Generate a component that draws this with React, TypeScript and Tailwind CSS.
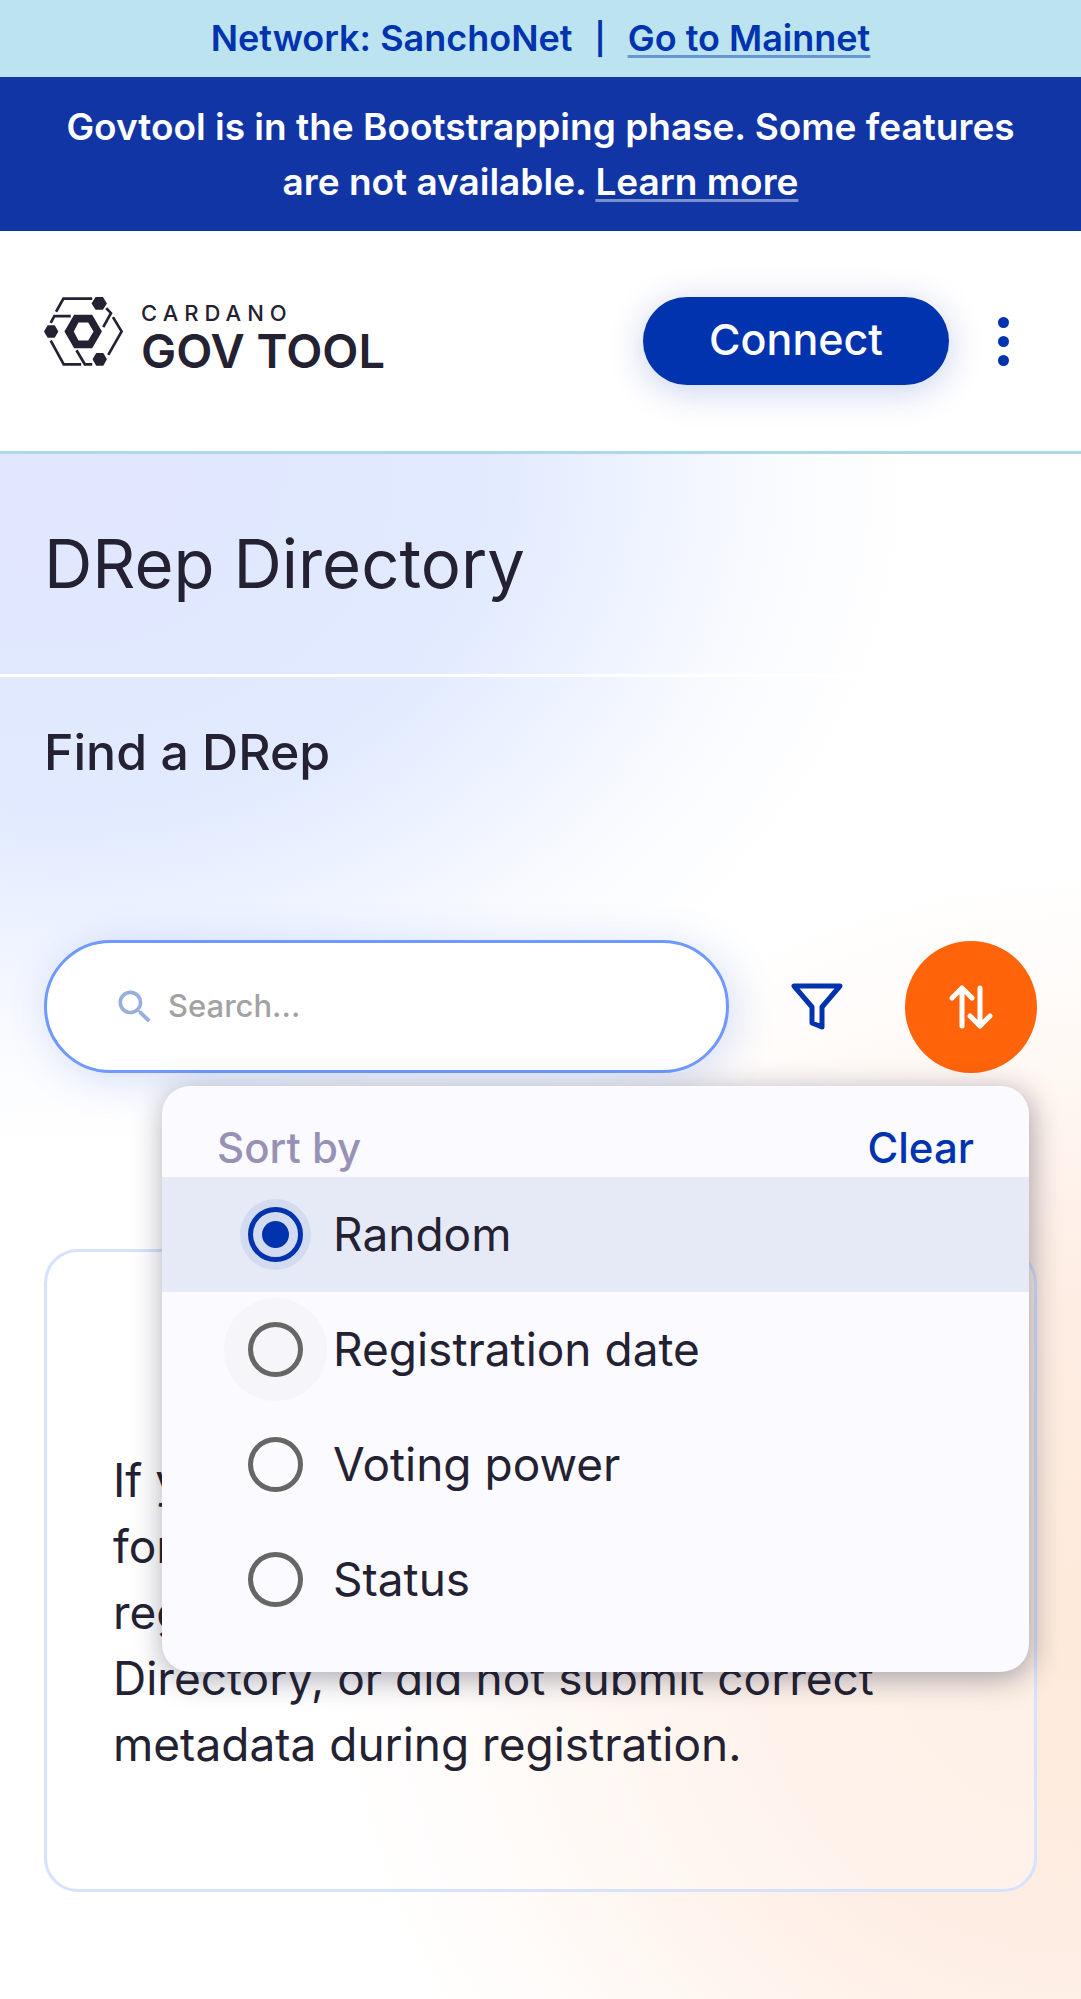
import { useState } from "react";

const SORT_OPTIONS = ["Random", "Registration date", "Voting power", "Status"];

function LogoMark() {
  return (
    <svg viewBox="0 0 236 206" className="h-[69px] w-[79px]" fill="none" stroke="#242232" strokeWidth="8" aria-hidden="true">
      <path d="M36 44 58 5H144" />
      <path d="M20 77 31 57H80" />
      <path d="M186 33 200 48 177 90" />
      <path d="M206 60 232 103 192 173" />
      <path d="M20 130 59 201H111" />
      <path d="M97 159 122 201H144" />
      <g fill="#242232" stroke="none">
        <path d="M154 0h22l12 19-12 19h-22l-12-19z" />
        <path d="M11 84h21l11 19-11 19H11L0 103z" />
        <path d="M156 167h21l11 19-11 19h-21l-11-19z" />
        <path fillRule="evenodd" d="M90 53h54l29 50-29 50H90l-29-50zM103 76l-14 27 14 27h29l16-27-16-27z" />
      </g>
    </svg>
  );
}

function Header() {
  return (
    <header className="flex items-start justify-between border-b-[3px] border-[#add8e6] bg-white py-[66px] pr-14 pl-11">
      <a href="#home" className="flex items-start gap-[18px] text-[#242232]" aria-label="Cardano Gov Tool">
        <LogoMark />
        <span className="flex flex-col">
          <span className="text-[22px] leading-8 font-medium tracking-[6px]">CARDANO</span>
          <span className="text-[47px] leading-[44px] font-semibold">GOV TOOL</span>
        </span>
      </a>
      <div className="flex items-center gap-8">
        <button
          type="button"
          className="rounded-full bg-[#0033ad] px-[66px] pt-3 pb-4 text-[43px] leading-[60px] font-medium text-white shadow-[0_6px_36px_rgba(0,51,173,0.22)]"
        >
          Connect
        </button>
        <button type="button" aria-label="Open menu" className="flex w-11 flex-col items-center gap-2">
          <span className="size-[11px] rounded-full bg-[#0033ad]" />
          <span className="size-[11px] rounded-full bg-[#0033ad]" />
          <span className="size-[11px] rounded-full bg-[#0033ad]" />
        </button>
      </div>
    </header>
  );
}

function SortPopover() {
  const [selected, setSelected] = useState("Random");
  return (
    <div className="absolute top-full right-2 left-[118px] z-10 mt-[13px] rounded-[28px] bg-[#fbfaff] pt-[33px] pb-[35px] shadow-[2px_6px_30px_rgba(20,20,50,0.38)]">
      <div className="flex items-center justify-between px-[55px] text-[42px] leading-[58px] font-medium">
        <span className="text-[#9792b5]">Sort by</span>
        <button type="button" className="text-[#0033ad]" onClick={() => setSelected("")}>
          Clear
        </button>
      </div>
      <div role="radiogroup" aria-label="Sort by">
        {SORT_OPTIONS.map((option) => (
          <label
            key={option}
            className="group flex items-center gap-[30px] py-[30px] pl-[86px] text-[46px] leading-[55px] text-[#242232] has-checked:bg-[#e6eaf6]"
          >
            <input
              type="radio"
              name="sort"
              checked={selected === option}
              onChange={() => setSelected(option)}
              className="grid size-[55px] shrink-0 appearance-none place-items-center rounded-full border-[5px] border-[#666666] before:size-[27px] before:rounded-full group-nth-2:bg-[#f6f6fa] group-nth-2:shadow-[0_0_0_24px_#f6f6fa] checked:border-[#0033ad] checked:bg-[#d2dbef] checked:shadow-[0_0_0_8px_#d2dbef] checked:before:bg-[#0033ad]"
            />
            {option}
          </label>
        ))}
      </div>
    </div>
  );
}

function SearchBar() {
  return (
    <div className="relative flex items-center">
      <label className="flex h-[133px] min-w-0 flex-1 items-center gap-[11px] rounded-full border-[3px] border-[#6f99ff] bg-white pl-[66px] shadow-[6px_6px_44px_rgba(47,98,220,0.2)]">
        <svg viewBox="0 0 24 24" className="size-11 shrink-0" fill="#99adde" aria-hidden="true">
          <path d="M15.5 14h-.79l-.28-.27C15.41 12.59 16 11.11 16 9.5 16 5.91 13.09 3 9.5 3S3 5.91 3 9.5 5.91 16 9.5 16c1.61 0 3.09-.59 4.23-1.57l.27.28v.79l5 4.99L20.49 19zm-6 0C7.01 14 5 11.99 5 9.5S7.01 5 9.5 5 14 7.01 14 9.5 11.99 14 9.5 14" />
        </svg>
        <input
          type="search"
          aria-label="Search"
          placeholder="Search..."
          className="w-full min-w-0 bg-transparent text-[31px] font-medium outline-none placeholder:text-[#a2a2a2]"
        />
      </label>
      <button type="button" aria-label="Filter" className="ml-[22px] grid size-[132px] place-items-center rounded-full">
        <svg viewBox="0 0 52 48" className="h-12 w-[52px]" fill="none" stroke="#0033ad" strokeWidth="5" strokeLinejoin="round" aria-hidden="true">
          <path d="M3 3h46L31 24v20l-10-4V24z" />
        </svg>
      </button>
      <button type="button" aria-label="Sort" className="ml-[22px] grid size-[132px] place-items-center rounded-full bg-[#ff640a]">
        <svg viewBox="0 0 44 44" className="size-11" fill="none" stroke="white" strokeWidth="5" strokeLinecap="round" strokeLinejoin="round" aria-hidden="true">
          <path d="M13 41V3M3 13 13 3l10 10M31 3v38M21 31l10 10 10-10" />
        </svg>
      </button>
      <SortPopover />
    </div>
  );
}

export default function App() {
  return (
    <div className="min-h-screen bg-white font-['Inter',sans-serif] text-[#242232]">
      <div className="flex items-center justify-center bg-[#bce3f0] text-[36px] leading-[77px] font-semibold text-[#0033ad]">
        <span>Network: SanchoNet</span>
        <span className="px-[22px] text-[31px]">|</span>
        <a href="#mainnet" className="underline decoration-[#0033ad]/45 decoration-3 underline-offset-4">
          Go to Mainnet
        </a>
      </div>
      <p className="bg-[#1235a6] px-14 py-[22px] text-center text-[37px] leading-[55px] font-semibold text-white">
        Govtool is in the Bootstrapping phase. Some features are not available.{" "}
        <a href="#learn-more" className="underline decoration-white/45 decoration-3 underline-offset-4">
          Learn more
        </a>
      </p>
      <Header />
      <main className="bg-[radial-gradient(ellipse_860px_680px_at_60px_20px,#e0e7ff_0%,#e1eaff_50%,#eef3ff_68%,#fafbff_84%,#ffffff00_100%),radial-gradient(ellipse_760px_760px_at_1081px_1170px,#fdeada_0%,#feede3_42%,#fff5ef_66%,#fffcfa_86%,#ffffff00_100%)] pb-[107px]">
        <h1 className="border-b-[3px] border-white px-11 py-[70px] text-[67px] leading-[80px]">DRep Directory</h1>
        <section className="px-11 pt-[45px]">
          <h2 className="mb-[158px] text-[50px] leading-[60px] font-medium">Find a DRep</h2>
          <SearchBar />
          <article className="mt-[176px] rounded-[34px] border-[3px] border-[#d6e2ff] bg-white/30 px-[66px] pt-[195px] pb-[112px]">
            <p className="text-[46px] leading-[66px]">
              If you cannot find the DRep
              <br />
              for your search, they have not
              <br />
              registered in the DRep
              <br />
              Directory, or did not submit correct
              <br />
              metadata during registration.
            </p>
          </article>
        </section>
      </main>
    </div>
  );
}
